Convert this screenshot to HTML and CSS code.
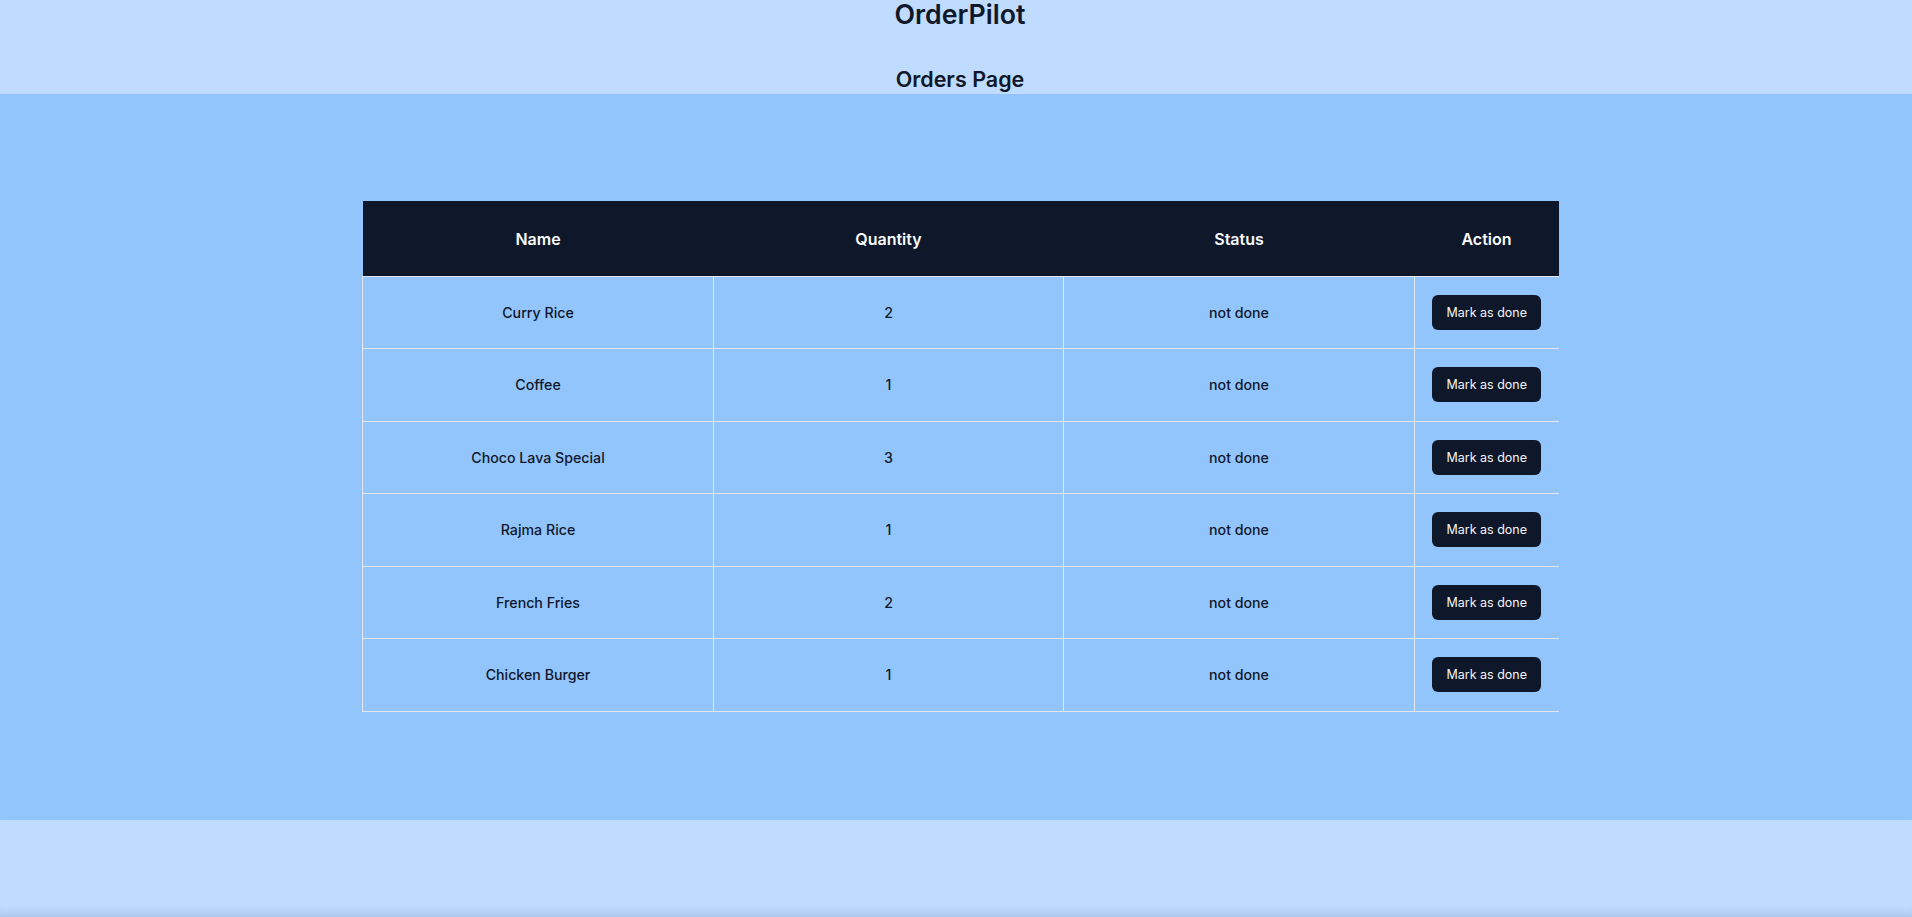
FILE: index.html
```html
<!DOCTYPE html>
<html lang="en">
<head>
<meta charset="utf-8">
<title>OrderPilot</title>
<link rel="stylesheet" href="styles.css">
</head>
<body>
<header class="top">
  <h1 class="brand">OrderPilot</h1>
  <h2 class="page-title">Orders Page</h2>
</header>
<main class="main">
  <div class="table-wrap">
    <table class="orders">
      <thead>
        <tr><th class="c1">Name</th><th class="c2">Quantity</th><th class="c3">Status</th><th class="c4">Action</th></tr>
      </thead>
      <tbody>
        <tr><td>Curry Rice</td><td>2</td><td>not done</td><td><button class="btn">Mark as done</button></td></tr>
        <tr><td>Coffee</td><td>1</td><td>not done</td><td><button class="btn">Mark as done</button></td></tr>
        <tr><td>Choco Lava Special</td><td>3</td><td>not done</td><td><button class="btn">Mark as done</button></td></tr>
        <tr><td>Rajma Rice</td><td>1</td><td>not done</td><td><button class="btn">Mark as done</button></td></tr>
        <tr><td>French Fries</td><td>2</td><td>not done</td><td><button class="btn">Mark as done</button></td></tr>
        <tr><td>Chicken Burger</td><td>1</td><td>not done</td><td><button class="btn">Mark as done</button></td></tr>
      </tbody>
    </table>
  </div>
</main>
<footer class="foot"></footer>
</body>
</html>
```
FILE: styles.css
```css
* { box-sizing: border-box; }
html, body { margin: 0; padding: 0; }
body {
  font-family: Inter, "Noto Sans", sans-serif;
  color: #0f172a;
  background: #bfdbfe;
  overflow: hidden;
}
.top {
  background: #bfdbfe;
  height: 94px;
  padding-left: 8px;
  display: flex;
  flex-direction: column;
  align-items: center;
}
.brand {
  margin: 0;
  font-size: 26.7px;
  line-height: 28px;
  font-weight: 600;
}
.page-title {
  margin: 38.9px 0 0;
  font-size: 21.5px;
  line-height: 24px;
  font-weight: 600;
}
.main {
  background: #93c5fd;
  height: 726px;
  padding-top: 107px;
  padding-left: 8px;
  display: flex;
  justify-content: center;
}
.table-wrap {
  width: 1196px;
}
.orders {
  width: 1196px;
  border-collapse: collapse;
  table-layout: fixed;
}
.c1 { width: 351px; }
.c2 { width: 350px; }
.c3 { width: 351px; }
.c4 { width: 144px; }
.orders th {
  background: #0f172a;
  color: #f8fafc;
  height: 75px;
  padding: 2px 0 0;
  font-size: 16px;
  font-weight: 600;
  text-align: center;
}
.orders td {
  height: 72.5px;
  padding: 0;
  border: 1px solid #e5e7eb;
  text-align: center;
  vertical-align: middle;
  font-size: 14.2px;
  font-weight: 500;
  color: #0f172a;
}
.orders td:last-child { border-right: none; }
.btn {
  display: inline-block;
  height: 35px;
  padding: 0 14px;
  border: none;
  border-radius: 6px;
  background: #0f172a;
  color: #f1f5f9;
  font-family: Inter, "Noto Sans", sans-serif;
  font-size: 12.5px;
  font-weight: 400;
  cursor: pointer;
}
.foot {
  height: 97px;
  background: #bfdbfe;
  box-shadow: inset 0 -12px 12px -10px rgba(15, 23, 42, 0.14);
}
```
